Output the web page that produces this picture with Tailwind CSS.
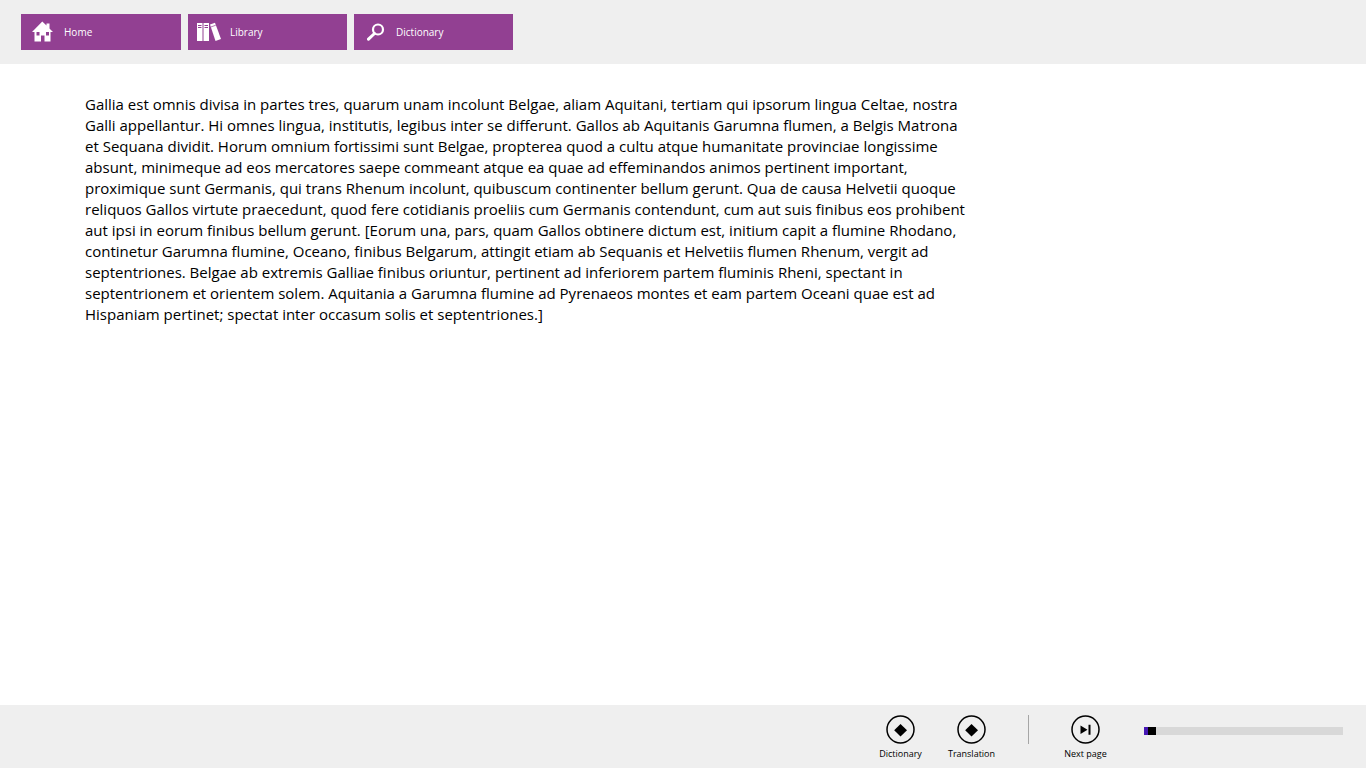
<!DOCTYPE html>
<html lang="en">
<head>
<meta charset="utf-8">
<meta name="viewport" content="width=device-width, initial-scale=1">
<title>Reader</title>
<script src="https://cdn.jsdelivr.net/npm/@tailwindcss/browser@4"></script>
</head>
<body class="flex min-h-screen flex-col bg-white font-['Open_Sans','Noto_Sans',sans-serif] text-black">
<header class="bg-[#efefef] px-[21px] py-[14px]">
  <nav class="flex gap-[7px]">
    <a href="#home" class="flex h-9 w-40 items-center bg-[#924092] pl-[11px] text-[10px] text-white">
      <svg class="mr-[11px] h-[22px] w-[21px]" viewBox="0 0 21 22" fill="currentColor" aria-hidden="true"><path fill-rule="evenodd" d="M10.300 .5 14.500 4.500V2.500h3V7.500L21 11H18.500V20.500H12.500V14.500H9V20.500H2.500V11H0zM4.500 11V14.500H7.500V11zM14 11V14.500H17V11z"/></svg>
      <span class="pt-px">Home</span>
    </a>
    <a href="#library" class="flex h-9 w-[159px] items-center bg-[#924092] pl-[9px] text-[10px] text-white">
      <svg class="mr-[9px] h-[20px] w-6" viewBox="0 0 24 20" fill="currentColor" aria-hidden="true"><path fill-rule="evenodd" d="M0 1H5.500V19H0zM1 3V4H4.500V3zM1 5V6H4.500V5zM6.500 1H12V19H6.500zM7.500 3V4H11V3zM7.500 5V6H11V5z"/><path d="M13 2.500 18 .8 24 17 18.500 19z"/><path d="M13.800 5 18.800 3.200" stroke="#924092" stroke-width=".7"/></svg>
      <span class="pt-px">Library</span>
    </a>
    <a href="#dictionary" class="flex h-9 w-[159px] items-center bg-[#924092] pl-[13px] text-[10px] text-white">
      <svg class="mr-[11px] h-[18px] w-[18px]" viewBox="0 0 18 18" fill="none" stroke="currentColor" aria-hidden="true"><circle cx="11" cy="6.500" r="5" stroke-width="2.200"/><path d="M7.500 10.500 1.500 16.200" stroke-width="3" stroke-linecap="round"/></svg>
      <span class="pt-px">Dictionary</span>
    </a>
  </nav>
</header>
<main class="flex-1 px-[85px] pt-[30px]">
  <p class="text-[15px] leading-[21px] whitespace-nowrap">Gallia est omnis divisa in partes tres, quarum unam incolunt Belgae, aliam Aquitani, tertiam qui ipsorum lingua Celtae, nostra<br>Galli appellantur. Hi omnes lingua, institutis, legibus inter se differunt. Gallos ab Aquitanis Garumna flumen, a Belgis Matrona<br>et Sequana dividit. Horum omnium fortissimi sunt Belgae, propterea quod a cultu atque humanitate provinciae longissime<br>absunt, minimeque ad eos mercatores saepe commeant atque ea quae ad effeminandos animos pertinent important,<br>proximique sunt Germanis, qui trans Rhenum incolunt, quibuscum continenter bellum gerunt. Qua de causa Helvetii quoque<br>reliquos Gallos virtute praecedunt, quod fere cotidianis proeliis cum Germanis contendunt, cum aut suis finibus eos prohibent<br>aut ipsi in eorum finibus bellum gerunt. [Eorum una, pars, quam Gallos obtinere dictum est, initium capit a flumine Rhodano,<br>continetur Garumna flumine, Oceano, finibus Belgarum, attingit etiam ab Sequanis et Helvetiis flumen Rhenum, vergit ad<br>septentriones. Belgae ab extremis Galliae finibus oriuntur, pertinent ad inferiorem partem fluminis Rheni, spectant in<br>septentrionem et orientem solem. Aquitania a Garumna flumine ad Pyrenaeos montes et eam partem Oceani quae est ad<br>Hispaniam pertinet; spectat inter occasum solis et septentriones.]</p>
</main>
<footer class="flex items-start justify-end bg-[#efefef] pt-[10px] pr-[23px] pb-2">
  <button type="button" class="flex w-[71px] flex-col items-center text-[9px] leading-3">
    <svg class="mb-1 h-[29px] w-[29px]" viewBox="0 0 29 29" aria-hidden="true"><circle cx="14.500" cy="14.500" r="13.500" fill="none" stroke="#000" stroke-width="1.500"/><path d="M14.500 9 21 15.300 14.500 21.500 8.200 15.300z"/></svg>
    <span>Dictionary</span>
  </button>
  <button type="button" class="flex w-[71px] flex-col items-center text-[9px] leading-3">
    <svg class="mb-1 h-[29px] w-[29px]" viewBox="0 0 29 29" aria-hidden="true"><circle cx="14.500" cy="14.500" r="13.500" fill="none" stroke="#000" stroke-width="1.500"/><path d="M14.500 9 21 15.300 14.500 21.500 8.200 15.300z"/></svg>
    <span>Translation</span>
  </button>
  <div class="mr-[21px] ml-[21px] h-[29px] w-px bg-[#a6a6a6]"></div>
  <button type="button" class="flex w-[71px] flex-col items-center text-[9px] leading-3">
    <svg class="mb-1 h-[29px] w-[29px]" viewBox="0 0 29 29" aria-hidden="true"><circle cx="14.500" cy="14.500" r="13.500" fill="none" stroke="#000" stroke-width="1.500"/><path d="M9.500 10.500 16.500 14.800 9.500 19zM17.500 9.800h2v10h-2z"/></svg>
    <span>Next page</span>
  </button>
  <input type="range" aria-label="Page" min="0" max="100" value="2" class="mt-[12px] ml-[23px] h-2 w-[199px] appearance-none bg-[linear-gradient(90deg,#4617b4_4px,#d8d8d8_4px)] [&::-webkit-slider-thumb]:h-2 [&::-webkit-slider-thumb]:w-2 [&::-webkit-slider-thumb]:appearance-none [&::-webkit-slider-thumb]:bg-black">
</footer>
</body>
</html>
